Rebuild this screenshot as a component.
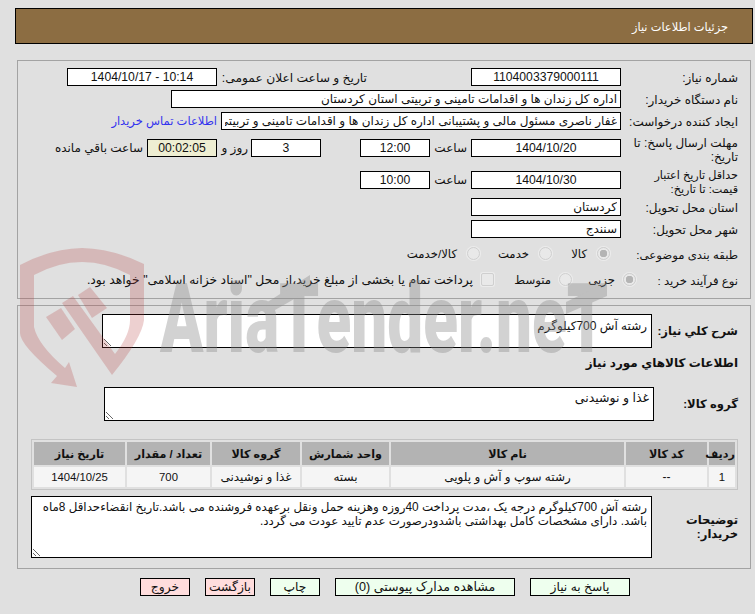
<div class="page" dir="rtl">
  <div class="head">جزئیات اطلاعات نیاز</div>

  <section class="panel info">
    <div class="row">
      <span class="lab">شماره نیاز:</span>
      <input class="box w150 c" readonly value="1104003379000111" />
      <span class="lab2">تاریخ و ساعت اعلان عمومی:</span>
      <input class="box w150 c" dir="ltr" readonly value="1404/10/17 - 10:14" />
    </div>
    <div class="row">
      <span class="lab">نام دستگاه خریدار:</span>
      <input class="box w450" readonly value="اداره کل زندان ها و اقدامات تامینی و تربیتی استان کردستان" />
    </div>
    <div class="row">
      <span class="lab">ایجاد کننده درخواست:</span>
      <input class="box w400" readonly value="غفار ناصری مسئول مالی و پشتیبانی اداره کل زندان ها و اقدامات تامینی و تربیتی استان کردستان" />
      <span class="link">اطلاعات تماس خریدار</span>
    </div>
    <div class="row gap9">
      <span class="lab tall">مهلت ارسال پاسخ: تا تاریخ:</span>
      <input class="box w150 c" readonly value="1404/10/20" />
      <span class="unit">ساعت</span>
      <input class="box w70 c" readonly value="12:00" />
      <input class="box w70 c ml39" readonly value="3" />
      <span class="rooz">روز و</span>
      <input class="box w70 c timer" readonly value="00:02:05" />
      <span class="rem">ساعت باقي مانده</span>
    </div>
    <div class="row gap14">
      <span class="lab tall narrow">حداقل تاریخ اعتبار قیمت: تا تاریخ:</span>
      <input class="box w150 c" readonly value="1404/10/30" />
      <span class="unit">ساعت</span>
      <input class="box w70 c" readonly value="10:00" />
    </div>
    <div class="row gap9">
      <span class="lab">استان محل تحویل:</span>
      <input class="box w150" readonly value="کردستان" />
    </div>
    <div class="row">
      <span class="lab">شهر محل تحویل:</span>
      <input class="box w150" readonly value="سنندج" />
    </div>
    <div class="row opts r8">
      <span class="lab">طبقه بندی موضوعی:</span>
      <input type="radio" class="opt first" name="a" checked disabled /><span class="t1">کالا</span>
      <input type="radio" class="opt" name="a" disabled /><span class="t2">خدمت</span>
      <input type="radio" class="opt" name="a" disabled /><span>کالا/خدمت</span>
    </div>
    <div class="row opts r9">
      <span class="lab short">نوع فرآیند خرید :</span>
      <input type="radio" class="opt tight" name="b" checked disabled /><span class="t3">جزیی</span>
      <input type="radio" class="opt tight" name="b" disabled /><span class="t4">متوسط</span>
      <input type="checkbox" class="opt tight" disabled /><span class="long">پرداخت تمام یا بخشی از مبلغ خرید،از محل "اسناد خزانه اسلامی" خواهد بود.</span>
    </div>
  </section>

  <section class="panel detail">
    <div class="row tarow">
      <span class="blab w86">شرح کلي نیاز:</span>
      <textarea class="ta sm first-ta" readonly>رشته آش 700کیلوگرم</textarea>
    </div>
    <div class="sub">اطلاعات کالاهاي مورد نیاز</div>
    <div class="row tarow t2row">
      <span class="blab w84">گروه کالا:</span>
      <textarea class="ta sm group-ta" readonly>غذا و نوشیدنی</textarea>
    </div>
    <table>
      <thead>
        <tr>
          <th class="c1">ردیف</th><th class="c2">کد کالا</th><th class="c3">نام کالا</th><th class="c4">واحد شمارش</th><th class="c5">گروه کالا</th><th class="c6">تعداد / مقدار</th><th class="c7">تاریخ نیاز</th>
        </tr>
      </thead>
      <tbody>
        <tr>
          <td class="num">1</td><td>--</td><td>رشته سوپ و آش و پلویی</td><td>بسته</td><td>غذا و نوشیدنی</td><td class="num">700</td><td class="num">1404/10/25</td>
        </tr>
      </tbody>
    </table>
    <div class="row tarow t3row">
      <span class="blab w86 two">توضیحات خریدار:</span>
      <textarea class="ta lg" readonly>رشته آش 700کیلوگرم درجه یک ،مدت پرداخت 40روزه وهزینه حمل ونقل برعهده فروشنده می باشد.تاریخ انقضاءحداقل 8ماه باشد. دارای مشخصات کامل بهداشتی باشدودرصورت عدم تایید عودت می گردد.</textarea>
    </div>
  </section>

  <div class="btns">
    <button class="go b100">پاسخ به نیاز</button>
    <button class="go b180">مشاهده مدارک پیوستی (0)</button>
    <button class="go b50">چاپ</button>
    <button class="stop b50">بازگشت</button>
    <button class="stop b50">خروج</button>
  </div>

  <svg class="mark" viewBox="0 0 755 614" width="755" height="614" aria-hidden="true">
    <g class="shield">
      <path d="M20 265 Q50 249 82 248 Q114 249 144 264 L144 320 Q142 338 112 375 L62 303 L73 296 L115 354 Q130 335 130 320 L130 275 Q106 262 82 262 Q58 262 34 275 L34 327 Q38 345 65 368 L69 362 L77 387 L51 383 L57 376 Q20 345 20 333 Z" />
      <path d="M46 317 L61 308 L75 329 L62 340 Z" />
      <path d="M78 295 L90 287 L107 308 L92 318 Z" />
    </g>
    <g class="wordmark">
      <text class="word" x="160" y="352" dir="ltr" textLength="447" lengthAdjust="spacingAndGlyphs">AriaTender.neT</text>
      <path d="M266 303 L310 275 L310 290 L268 314 Z" />
      <path d="M566 302 L607 282 L607 296 L566 314 Z" />
    </g>
  </svg>
</div>

<style>
  :global(body) {
    margin: 0;
    background: #e0e0e0;
    overflow: hidden;
  }
  .page {
    position: relative;
    width: 755px;
    height: 614px;
    padding-top: 8px;
    box-sizing: border-box;
    font: 12px/14px "Liberation Sans", "DejaVu Sans", sans-serif;
    color: #111;
    overflow: hidden;
  }
  .head {
    box-sizing: border-box;
    height: 36px;
    margin: 0 2px 0 15px;
    padding: 11px 24px 0 0;
    border: 1px solid #000;
    background: #8c6d42;
    color: #fff;
    font-size: 11.4px;
  }
  .panel {
    box-sizing: border-box;
    margin: 0 4px 0 17px;
    padding-right: 12px;
    border: 1px solid #a3a3a3;
  }
  .info {
    height: 239px;
    margin-top: 16px;
    padding-top: 7px;
  }
  .detail {
    height: 264px;
    margin-top: 6px;
    padding-top: 8px;
  }
  .row {
    display: flex;
    align-items: center;
    height: 18px;
    margin-top: 4px;
  }
  .info .row:first-child,
  .detail .row:first-child {
    margin-top: 0;
  }
  .row.gap9 { margin-top: 9px; }
  .row.gap14 { margin-top: 14px; }
  .lab {
    flex: none;
    width: 117px;
    box-sizing: border-box;
    padding: 1px 0 0 3px;
  }
  .lab.tall { margin-top: 3px; padding-top: 0; }
  .lab.narrow { font-size: 11.2px; }
  .lab.short { width: 102px; }
  .lab2 {
    flex: none;
    width: 150px;
    margin-right: 104px;
    padding-top: 1px;
    font-size: 12.25px;
    white-space: nowrap;
  }
  .box {
    flex: none;
    box-sizing: border-box;
    height: 18px;
    padding: 0 3px;
    border: 1px solid #000;
    border-radius: 0;
    background: #fff;
    color: #111;
    font: inherit;
    outline: none;
  }
  .c { text-align: center; font-size: 12.2px; }
  .w150 { width: 150px; }
  .w450 { width: 450px; }
  .w400 { width: 400px; }
  .w70 { width: 70px; }
  .ml39 { margin-right: 39px; }
  .timer { background: #eeeed2; }
  .link { margin-right: 4px; color: #3333ee; font-size: 11.5px; white-space: nowrap; }
  .unit { flex: none; width: 41px; box-sizing: border-box; padding-right: 4px; }
  .rooz { flex: none; width: 34px; box-sizing: border-box; padding-right: 3px; }
  .rem { margin-right: 4px; white-space: nowrap; }
  .opts { font-size: 11.7px; white-space: nowrap; }
  .r8 { margin-top: 7px; }
  .r9 { margin-top: 8px; }
  .long { font-size: 12.4px; }
  .opt {
    appearance: none;
    flex: none;
    box-sizing: border-box;
    width: 13px;
    height: 13px;
    margin: -2px 0 0 10px;
    border: 1px solid #cfcfcf;
    border-radius: 50%;
    background: #e9e9e9;
    box-shadow: 0 0 0 1px #ececec;
  }
  .opt.first { margin-right: 11px; }
  .opt.tight { margin-left: 8px; }
  .opt[type="checkbox"] { border-radius: 2px; }
  .opt:checked { background: radial-gradient(circle, #b4b4b4 0 3.5px, #e9e9e9 4px); }
  .t1 { width: 35px; }
  .t2 { width: 49px; }
  .t3 { width: 43px; }
  .t4 { width: 57px; }
  .tarow { height: auto; }
  .blab { flex: none; font-size: 11.6px; font-weight: 700; white-space: nowrap; }
  .w86 { width: 86px; }
  .w84 { width: 84px; }
  .two { width: 70px; margin-left: 16px; white-space: normal; }
  .ta {
    flex: none;
    box-sizing: border-box;
    display: block;
    width: 550px;
    margin: 0;
    padding: 3px 4px;
    border: 1px solid #000;
    border-radius: 0;
    background: #fff;
    color: #111;
    font: inherit;
    outline: none;
  }
  .first-ta { padding-top: 4px; }
  .group-ta { font-size: 12.5px; }
  .sm { height: 34px; }
  .lg { width: 621px; height: 62px; font-size: 11.85px; }
  .sub { margin-top: 8px; font-weight: 700; }
  .t2row { margin-top: 17px; }
  table {
    width: 707px;
    margin-top: 18px;
    border: 1px solid #c4c4c4;
    border-spacing: 2px;
    table-layout: fixed;
    text-align: center;
  }
  th {
    height: 23px;
    padding: 0;
    background: #b3b3b3;
    font-size: 11.2px;
    font-weight: 700;
  }
  td {
    height: 20px;
    padding: 0;
    background: #f5f5f5;
  }
  td.num { font-size: 11.3px; }
  .c1 { width: 26px; }
  .c2 { width: 81px; }
  .c3 { width: 233px; }
  .c4 { width: 87px; }
  .c5 { width: 88px; }
  .c6 { width: 83px; }
  .c7 { width: 91px; }
  .t3row { margin-top: 6px; }
  .btns {
    display: flex;
    gap: 15px;
    margin: 9px 125px 0 0;
  }
  button {
    box-sizing: border-box;
    height: 18px;
    padding: 0;
    border: 1px solid #000;
    border-radius: 0;
    color: #111;
    font: inherit;
    font-size: 12.3px;
  }
  .go { background: #eeffee; }
  .stop { background: #ffdddd; }
  .b100 { width: 100px; }
  .b180 { width: 180px; font-size: 12.6px; }
  .b50 { width: 50px; }
  .mark {
    position: absolute;
    left: 0;
    top: 0;
    pointer-events: none;
  }
  .shield path { fill: #b43c3c; fill-opacity: 0.24; }
  .wordmark { opacity: 0.38; }
  .wordmark path { fill: #8a8a8a; }
  .word {
    direction: ltr;
    font: 900 97px Roboto, sans-serif;
    fill: #8a8a8a;
  }
</style>
